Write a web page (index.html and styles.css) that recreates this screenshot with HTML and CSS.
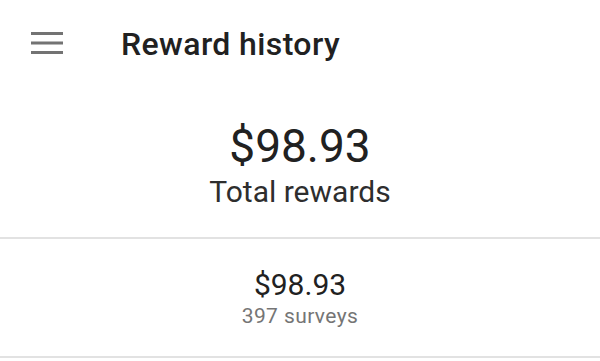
FILE: index.html
```html
<!DOCTYPE html>
<html lang="en">
<head>
    <meta charset="UTF-8">
    <meta name="viewport" content="width=device-width, initial-scale=1.0">
    <title>Reward history</title>
    <link rel="stylesheet" href="styles.css">
</head>
<body>
    <header class="topbar">
        <button class="menu-btn" aria-label="Menu">
            <svg width="32" height="22" viewBox="0 0 32 22">
                <rect x="0" y="0" width="32" height="3" fill="#737373"/>
                <rect x="0" y="9.5" width="32" height="3" fill="#737373"/>
                <rect x="0" y="19" width="32" height="3" fill="#737373"/>
            </svg>
        </button>
        <h1 class="title">Reward history</h1>
    </header>

    <section class="summary">
        <div class="total">$98.93</div>
        <div class="total-label">Total rewards</div>
    </section>

    <section class="entry">
        <div class="entry-amount">$98.93</div>
        <div class="entry-count">397 surveys</div>
    </section>
</body>
</html>
```

FILE: styles.css
```css
body {
    margin: 0;
    background-color: #fff;
    color: #202124;
    font-family: Roboto, "Open Sans", sans-serif;
}
.topbar {
    display: flex;
    align-items: center;
    height: 88px;
}
.menu-btn {
    border: none;
    background: none;
    padding: 0;
    margin-left: 31px;
    margin-top: -2px;
    width: 32px;
    height: 22px;
    display: flex;
}
.title {
    margin: 0 0 0 58px;
    font-size: 32px;
    font-weight: 500;
    letter-spacing: 0.4px;
    color: #212121;
}
.summary {
    box-sizing: border-box;
    text-align: center;
    padding-top: 31px;
    height: 151px;
    border-bottom: 2px solid #e2e2e2;
}
.total {
    font-size: 46px;
    line-height: 54px;
    color: #212121;
}
.total-label {
    font-size: 30px;
    line-height: 38px;
    color: #2e2e2e;
}
.entry {
    box-sizing: border-box;
    text-align: center;
    padding-top: 28px;
    height: 119px;
    border-bottom: 2px solid #e2e2e2;
}
.entry-amount {
    font-size: 30px;
    line-height: 35px;
    color: #212121;
}
.entry-count {
    font-size: 21px;
    line-height: 28px;
    letter-spacing: 0.4px;
    color: #757575;
}
```
